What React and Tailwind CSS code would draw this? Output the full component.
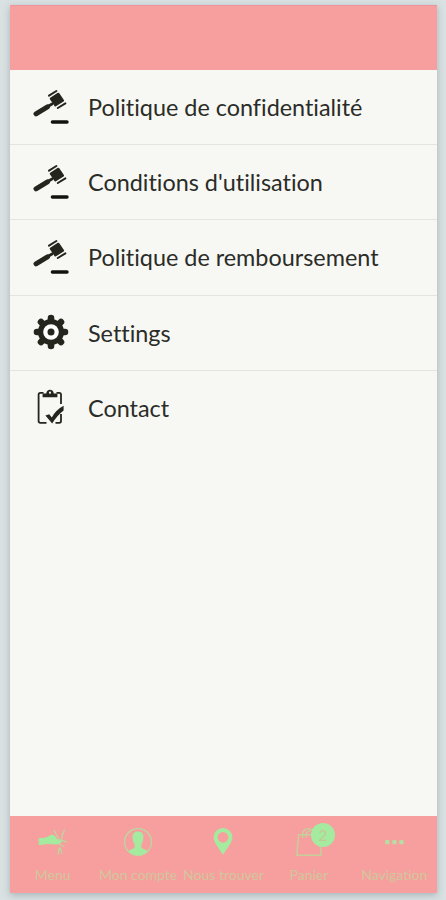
import React from 'react';

const GavelIcon = () => (
  <svg viewBox="0 0 36 36" className="w-9 h-9 -mt-0.5" fill="none" stroke="#24251d" strokeLinecap="round">
    <path d="M3 25.8L14.5 18.9" strokeWidth="5" />
    <path d="M14 19L19 16" strokeWidth="2.8" />
    <path d="M17.8 10.6L25.4 5.8L30 12.6L22.4 17.4Z" fill="#24251d" strokeWidth="2.2" strokeLinejoin="round" />
    <path d="M16 7.6L23.4 3" strokeWidth="2" />
    <path d="M24.8 20L32.4 15.4" strokeWidth="2" />
    <path d="M19.4 34H34" strokeWidth="3.4" stroke="#11120d" />
  </svg>
);

const GearIcon = () => (
  <svg viewBox="0 0 36 36" className="w-9 h-9 -mt-0.5">
    <g stroke="#24251d" strokeWidth="6.6" strokeLinecap="round">
      <path d="M18 4V32M4 18H32" />
      <path d="M8 8L28 28M28 8L8 28" />
    </g>
    <circle cx="18" cy="18" r="13" fill="#24251d" />
    <circle cx="18" cy="18" r="7.8" fill="#fff" />
    <circle cx="18" cy="18" r="3.5" fill="#24251d" />
  </svg>
);

const ClipboardIcon = () => (
  <svg viewBox="0 0 36 36" className="w-9 h-9 -mt-0.5" fill="none" stroke="#24251d" strokeWidth="1.8">
    <path d="M10.5 3.8H7.4Q5.6 3.8 5.6 5.6V32Q5.6 33.8 7.4 33.8H13.5" />
    <path d="M23.5 3.8H26.2Q28 3.8 28 5.6V15M28 25V32Q28 33.8 26.2 33.8H22.5" />
    <path d="M9.6 8.2V4.4H13.2Q13.8 0.8 17 0.8T20.8 4.4H24.4V8.2Z" fill="#24251d" stroke="none" />
    <circle cx="17" cy="3.7" r="1.1" fill="#f7f8f4" stroke="none" />
    <path d="M12.4 26.4L16.2 25.2L18.8 28.4Q23 20.8 30.6 16.8V21.4Q24 26.4 19.2 34.4Z" fill="#24251d" stroke="none" />
  </svg>
);

const HandIcon = () => (
  <svg viewBox="0 0 32 32" className="w-8 h-8" fill="none" stroke="#a4eba0" strokeLinecap="round">
    <path d="M2.4 12.6L9 12L14.6 9L17.6 10L19.4 13.2L24 14.2V16.6L20 18L10 17.6L2.4 18.6Z" fill="#a4eba0" strokeWidth="1" />
    <g strokeWidth="1.3" stroke="#bcd69e">
      <path d="M17 4.5L19.5 9L22 14" />
      <path d="M27.5 4L25.2 9L24.6 14.5L29.8 15.8" />
      <path d="M22 18L26.5 20.5M22.3 22L21 28.2M23 22L25 27.5" />
    </g>
  </svg>
);

const UserIcon = () => (
  <svg viewBox="0 0 32 32" className="w-8 h-8">
    <circle cx="16" cy="16" r="13.4" fill="none" stroke="#b3dda0" strokeWidth="1.2" />
    <path
      d="M16 5.6C12.2 5.6 10.4 8 10.6 11.5C10.7 14.4 11.5 16.8 12.6 18.1V21.4C11.4 23 8.4 23.2 6.4 25.2A13.4 13.4 0 0 0 25.6 25.2C23.6 23.2 20.6 23 19.4 21.4V18.1C20.5 16.8 21.3 14.4 21.4 11.5C21.6 8 19.8 5.6 16 5.6Z"
      fill="#a4eba0"
    />
  </svg>
);

const PinIcon = () => (
  <svg viewBox="0 0 32 32" className="w-8 h-8">
    <path
      fillRule="evenodd"
      d="M16 1.9A9.4 9.4 0 0 0 6.6 11.3C6.6 16.5 12.2 22.5 16 28.8C19.8 22.5 25.4 16.5 25.4 11.3A9.4 9.4 0 0 0 16 1.9ZM16 5.9A5.4 5.4 0 1 1 16 16.7A5.4 5.4 0 1 1 16 5.9Z"
      fill="#a4eba0"
    />
  </svg>
);

const BagIcon = () => (
  <div className="relative w-8 h-8">
    <svg viewBox="0 0 32 32" className="w-8 h-8" fill="none" stroke="#c6cf9c" strokeWidth="1.4">
      <path d="M5.6 8.8H26.4L28.2 29.2H3.8Z" />
      <path d="M9.6 12V8.2Q10.2 2.8 15.5 2.8T21.4 8.2V12" />
      <path d="M13 11.5V8.2Q13.6 5 18 4.6" />
    </svg>
    <span className="absolute left-[18px] -top-[3px] w-6 h-6 rounded-full bg-[#a4eba0] text-[#c3c994] text-[15px] leading-6 text-center">
      2
    </span>
  </div>
);

const DotsIcon = () => (
  <svg viewBox="0 0 32 32" className="w-8 h-8" fill="#b4dea2">
    <rect x="7.2" y="14" width="4.2" height="4.2" rx="1.2" />
    <rect x="14.3" y="14" width="4.2" height="4.2" rx="1.2" />
    <rect x="21.4" y="14" width="4.2" height="4.2" rx="1.2" />
  </svg>
);

const menuItems = [
  { label: 'Politique de confidentialité', icon: GavelIcon },
  { label: "Conditions d'utilisation", icon: GavelIcon },
  { label: 'Politique de remboursement', icon: GavelIcon },
  { label: 'Settings', icon: GearIcon },
  { label: 'Contact', icon: ClipboardIcon },
];

const tabs = [
  { label: 'Menu', icon: HandIcon },
  { label: 'Mon compte', icon: UserIcon },
  { label: 'Nous trouver', icon: PinIcon },
  { label: 'Panier', icon: BagIcon },
  { label: 'Navigation', icon: DotsIcon },
];

const App = () => {
  return (
    <div className="w-[446px] h-[900px] overflow-hidden bg-[#d9e1e2] pt-[5px] pl-[10px] font-['Lato',sans-serif] [font-variant-ligatures:none]">
      <div className="w-[427px] h-[888px] flex flex-col bg-[#f7f8f4] shadow-[0_2px_7px_rgba(110,120,135,0.45)]">
        <header className="h-[65px] shrink-0 bg-[#f79f9e] border-t border-[#ec9699]" />

        {/* Menu list */}
        <ul className="flex-1">
          {menuItems.map(({ label, icon: Icon }, index) => (
            <li
              key={label}
              className={`h-[75.2px] flex items-center pl-[23px] ${
                index < menuItems.length - 1 ? 'border-b-[1.5px] border-[#e4e5e3]' : ''
              }`}
            >
              <Icon />
              <span className="ml-[19px] text-[23.4px] leading-8 text-[#2b2c27] whitespace-nowrap">{label}</span>
            </li>
          ))}
        </ul>

        {/* Bottom tabs */}
        <nav className="h-[77px] shrink-0 grid grid-cols-5 bg-[#f79f9e]">
          {tabs.map(({ label, icon: Icon }) => (
            <div key={label} className="flex flex-col items-center pt-[10px]">
              <Icon />
              <span className="mt-[7px] text-sm text-[#d1c69c] whitespace-nowrap">{label}</span>
            </div>
          ))}
        </nav>
      </div>
    </div>
  );
};

export default App;
